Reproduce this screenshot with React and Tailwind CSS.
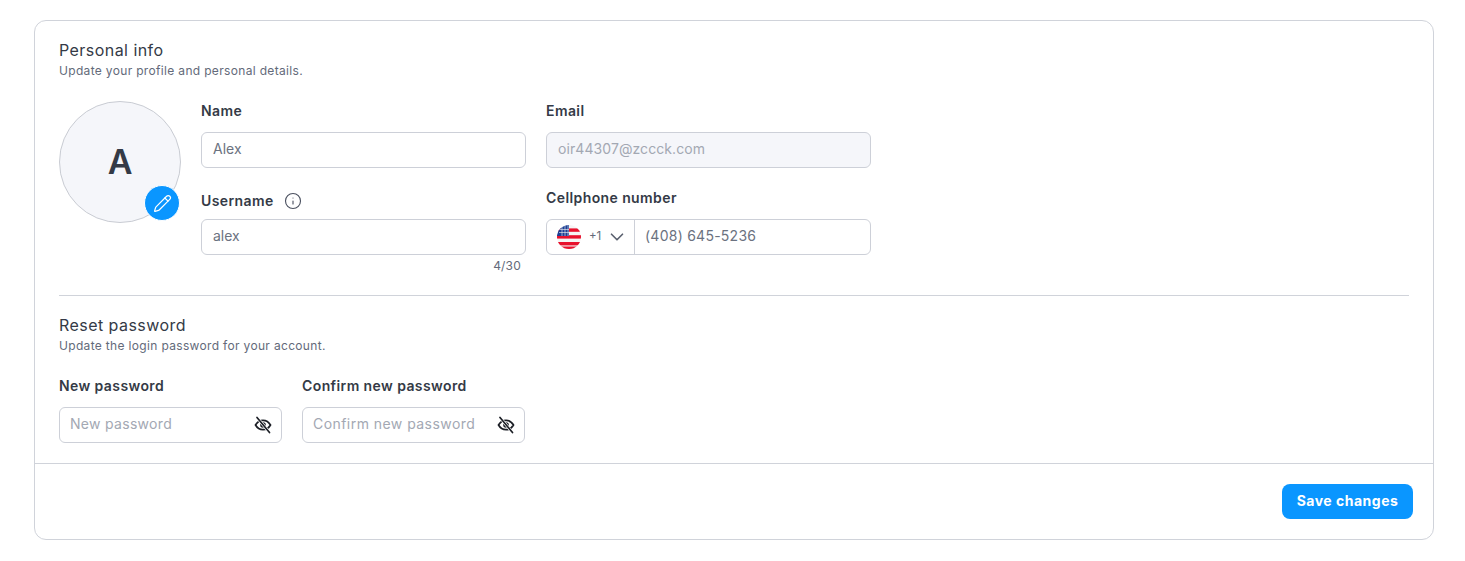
import { ChevronDown, Info, Pencil } from 'lucide-react';

const FONT = "font-['Inter','Liberation_Sans',sans-serif]";

function Label({ children, className = '' }) {
  return <p className={`h-5 text-[14px] leading-5 font-semibold tracking-[0.4px] text-[#343a46] ${className}`}>{children}</p>;
}

function TextInput({ value, placeholder, className = '' }) {
  return (
    <input
      readOnly
      value={value ?? ''}
      placeholder={placeholder}
      className={`h-9 w-[325px] rounded-md border border-[#cdd0d8] px-[11px] pb-[4px] text-[14px] text-[#6b7280] placeholder:text-[#a3a8b3] outline-none ${className}`}
    />
  );
}

function EyeSlash() {
  return (
    <svg width="18" height="18" viewBox="0 0 18 18" fill="none" stroke="#1c1f26" strokeWidth="1.7" strokeLinecap="round" className="shrink-0">
      <path d="M1.5 9c1.8-3.2 4.4-4.7 7.5-4.7s5.7 1.5 7.5 4.7c-1.8 3.2-4.4 4.7-7.5 4.7S3.3 12.2 1.5 9z" />
      <circle cx="9" cy="9" r="2.8" fill="#1c1f26" stroke="none" />
      <path d="M3 1.5l12.5 15" stroke="#fff" strokeWidth="2.8" />
      <path d="M3 1.5l12.5 15" />
    </svg>
  );
}

function PasswordField({ label, tracking, className = '' }) {
  return (
    <div>
      <Label className="mb-[1px] h-[30px]">{label}</Label>
      <div className={`flex h-9 items-center justify-between rounded-md border border-[#cdd0d8] pl-[10px] pr-[9px] ${className}`}>
        <span className={`pb-[4px] text-[14px] text-[#a3a8b3] ${tracking}`}>{label}</span>
        <EyeSlash />
      </div>
    </div>
  );
}

function UsFlag() {
  return (
    <svg width="24" height="24" viewBox="0 0 24 24" className="shrink-0">
      <defs>
        <clipPath id="flag-clip">
          <circle cx="12" cy="12" r="12" />
        </clipPath>
      </defs>
      <g clipPath="url(#flag-clip)">
        <rect width="24" height="24" fill="#f5f5f5" />
        <rect y="3.4" width="24" height="3.4" fill="#e8112d" />
        <rect y="10.2" width="24" height="3.4" fill="#e8112d" />
        <rect y="17" width="24" height="3.4" fill="#e8112d" />
        <rect y="21.5" width="24" height="3" fill="#e8112d" />
        <rect width="12" height="11" fill="#1c3f94" />
        <path d="M5 2v9M8 0v11M11 0v11M2 4.5h10M2 7.5h10" stroke="#f5f5f5" strokeOpacity="0.75" strokeWidth="0.8" />
      </g>
    </svg>
  );
}

export default function App() {
  return (
    <div className={`min-h-[561px] bg-white pl-[34px] pt-5 ${FONT}`}>
      <div className="h-[520px] w-[1400px] rounded-xl border border-[#d0d3da]">
        <div className="h-[443px] border-b border-[#d0d3da] px-6 pt-[19px]">
          <h2 className="h-5 text-[16px] leading-5 font-normal tracking-[0.45px] text-[#343a46]">Personal info</h2>
          <p className="mt-[3px] h-4 text-[12px] leading-4 tracking-[0.33px] text-[#636a7a]">Update your profile and personal details.</p>

          <div className="mt-[22px] flex h-[194px] gap-5">
            <div className="relative flex h-[122px] w-[122px] items-center justify-center rounded-full border border-[#c9ccd3] bg-[#f5f6fa]">
              <span className="pb-[2px] text-[34px] font-semibold text-[#343a46]">A</span>
              <span className="absolute left-[84px] top-[83px] flex h-9 w-9 items-center justify-center rounded-full border border-white bg-[#0a96ff]">
                <Pencil size={19} strokeWidth={1.5} className="text-white" />
              </span>
            </div>

            <div className="grid grid-cols-[325px_325px] content-start gap-x-5">
              <div>
                <Label className="mb-[11px]">Name</Label>
                <TextInput value="Alex" />
              </div>
              <div>
                <Label className="mb-[11px]">Email</Label>
                <TextInput placeholder="oir44307@zccck.com" className="bg-[#f5f6fa] tracking-[0.08px]" />
              </div>
              <div className="mt-[23px]">
                <div className="mb-[8px] flex h-5 items-center gap-[10px]">
                  <Label>Username</Label>
                  <Info size={18} strokeWidth={1.5} className="text-[#4b5160]" />
                </div>
                <TextInput value="alex" />
                <p className="mt-[3px] pr-[5px] text-right text-[12px] leading-4 tracking-[0.2px] text-[#636a7a]">4/30</p>
              </div>
              <div className="mt-[20px]">
                <Label className="mb-[11px]">Cellphone number</Label>
                <div className="flex h-9 w-[325px] items-center rounded-md border border-[#cdd0d8]">
                  <div className="flex h-full w-[88px] shrink-0 items-center border-r border-[#cdd0d8] pl-[10px]">
                    <UsFlag />
                    <span className="ml-2 text-[11.5px] text-[#636a7a]">+1</span>
                    <ChevronDown size={22} strokeWidth={1.8} className="ml-[5px] text-[#5a606e]" />
                  </div>
                  <span className="pb-[4px] pl-[10px] text-[14px] tracking-[0.25px] text-[#6b7280]">(408) 645-5236</span>
                </div>
              </div>
            </div>
          </div>

          <div className="h-px w-full bg-[#d0d3da]" />

          <h2 className="mt-[19px] h-5 text-[16px] leading-5 font-normal tracking-[0.45px] text-[#343a46]">Reset password</h2>
          <p className="mt-[3px] h-4 text-[12px] leading-4 tracking-[0.33px] text-[#636a7a]">Update the login password for your account.</p>

          <div className="mt-[22px] flex gap-5">
            <PasswordField label="New password" tracking="tracking-[0.3px]" className="w-[223px]" />
            <PasswordField label="Confirm new password" tracking="tracking-[0.45px]" className="w-[223px]" />
          </div>
        </div>

        <div className="flex justify-end pr-5 pt-5">
          <button className="h-[35px] w-[131px] rounded-lg bg-[#0a96ff] pb-[2px] text-[14px] font-bold tracking-[0.5px] text-white">Save changes</button>
        </div>
      </div>
    </div>
  );
}
